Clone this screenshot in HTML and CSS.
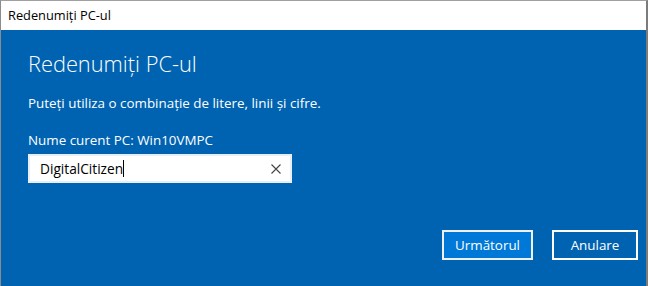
FILE: index.html
```html
<!DOCTYPE html>
<html lang="ro">
<head>
<meta charset="utf-8">
<link rel="stylesheet" href="styles.css">
</head>
<body>
<div class="window">
  <div class="titlebar">Redenumiți PC-ul</div>
  <div class="content">
    <h1 class="heading">Redenumiți PC-ul</h1>
    <p class="hint">Puteți utiliza o combinație de litere, linii și cifre.</p>
    <p class="current">Nume curent PC: Win10VMPC</p>
    <div class="input">
      <span class="value">DigitalCitizen</span><span class="caret"></span>
      <svg class="clear" width="10" height="10" viewBox="0 0 10 10"><path d="M0.5 0.5L9.5 9.5M9.5 0.5L0.5 9.5" stroke="#444" stroke-width="1.1" fill="none"/></svg>
    </div>
    <div class="actions">
      <button class="btn primary">Următorul</button>
      <button class="btn">Anulare</button>
    </div>
  </div>
</div>
</body>
</html>
```
FILE: styles.css
```css
html, body {
  margin: 0;
  padding: 0;
  height: 100%;
  background: #0063b1;
}
body {
  font-family: "Open Sans", "Noto Sans", sans-serif;
}
.window {
  height: 286px;
  box-sizing: border-box;
  border-top: 1px solid #a0a0a0;
  border-left: 1px solid #8c8c8c;
  border-right: 2px solid #7c7c7c;
  display: flex;
  flex-direction: column;
}
.titlebar {
  height: 29px;
  background: #fff;
  color: #000;
  font-size: 12.8px;
  line-height: 29px;
  padding-left: 7px;
  flex: none;
}
.content {
  flex: 1;
  background: #0063b1;
  color: #fff;
  padding: 20px 8px 0 27px;
  display: flex;
  flex-direction: column;
}
.heading {
  margin: 0;
  font-size: 21.8px;
  font-weight: 300;
  line-height: 28px;
}
.hint {
  margin: 16px 0 0;
  font-size: 13.4px;
  line-height: 18px;
}
.current {
  margin: 19px 0 0;
  font-size: 13.4px;
  line-height: 18px;
}
.input {
  margin-top: 5px;
  width: 264px;
  height: 29px;
  box-sizing: border-box;
  background: #fff;
  border: 2px solid #e6eef8;
  display: flex;
  align-items: center;
  padding: 0 9px 0 10px;
  color: #000;
  font-size: 13.7px;
}
.caret {
  width: 1px;
  height: 17px;
  background: #000;
}
.clear {
  margin-left: auto;
}
.actions {
  margin-top: 47px;
  display: flex;
  justify-content: flex-end;
  gap: 19px;
}
.btn {
  width: 91px;
  height: 30px;
  box-sizing: border-box;
  border: 2px solid #fff;
  background: #0063b1;
  color: #fff;
  font-family: inherit;
  font-size: 13.4px;
  padding: 0;
}
.btn.primary {
  background: #0078d7;
  border-color: #f0f0f0;
}
.btn:last-child {
  width: 86px;
}
```
